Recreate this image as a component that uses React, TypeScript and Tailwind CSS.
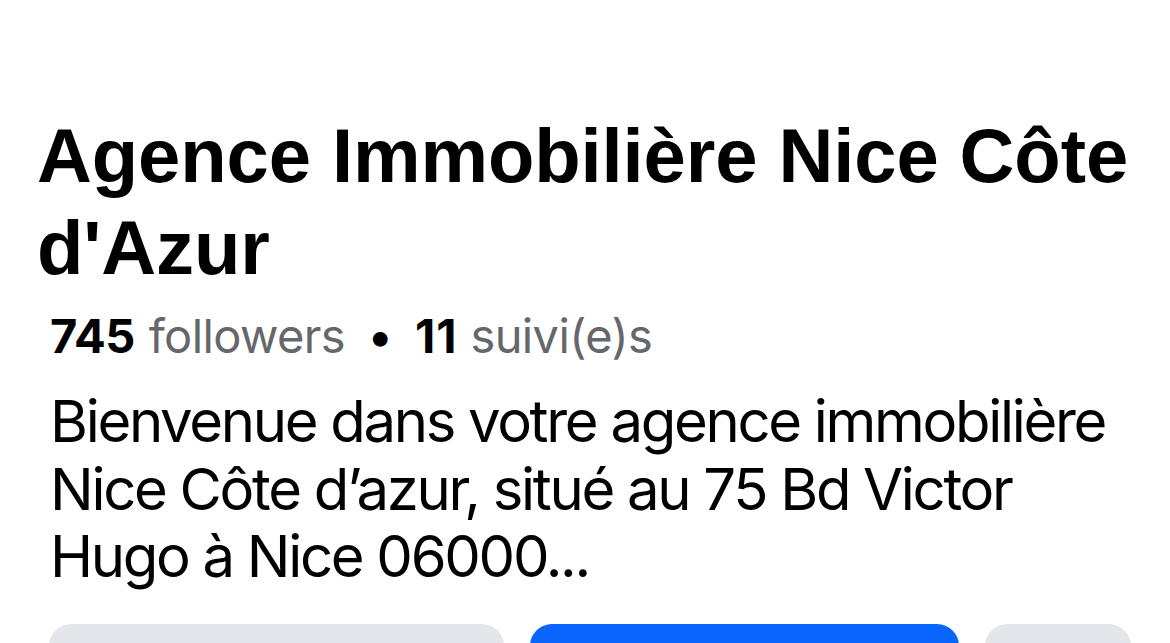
import React from 'react';

const App: React.FC = () => {
  return (
    <div className="h-[643px] w-[1170px] overflow-hidden bg-white">
      <div className="pt-[110px]">
        {/* Page name */}
        <h1 className="pl-[37px] pr-[20px] font-['Liberation_Sans',Arial,sans-serif] text-[76px] font-bold leading-[92px] tracking-[-0.1px] text-black whitespace-nowrap">
          Agence Immobilière Nice Côte
          <br />
          d'Azur
        </h1>

        {/* Stats */}
        <div className="mt-[14px] flex items-center pl-[50px] font-['Inter',sans-serif] text-[47px] leading-[56px] tracking-[-0.6px] whitespace-nowrap">
          <span className="font-bold text-black">745</span>
          <span className="ml-[14px] text-[#65676b]">followers</span>
          <span className="mx-[22px] text-black">•</span>
          <span className="font-bold text-black tracking-[1px]">11</span>
          <span className="ml-[13px] text-[#65676b]">suivi(e)s</span>
        </div>

        {/* Intro */}
        <p className="mt-[24px] pl-[50px] font-['Inter',sans-serif] text-[58px] leading-[67.5px] tracking-[-2.3px] text-black whitespace-nowrap">
          Bienvenue dans votre agence immobilière
          <br />
          Nice Côte d’azur, situé au 75 Bd Victor
          <br />
          Hugo à Nice 06000...
        </p>

        {/* Actions */}
        <div className="mt-[33px] flex gap-[26px] pl-[49px]">
          <div className="h-[80px] w-[455px] rounded-[22px] bg-[#e4e6eb]" />
          <div className="h-[80px] w-[429px] rounded-[22px] bg-[#0866ff]" />
          <div className="h-[80px] w-[146px] rounded-[22px] bg-[#e4e6eb]" />
        </div>
      </div>
    </div>
  );
};

export default App;
